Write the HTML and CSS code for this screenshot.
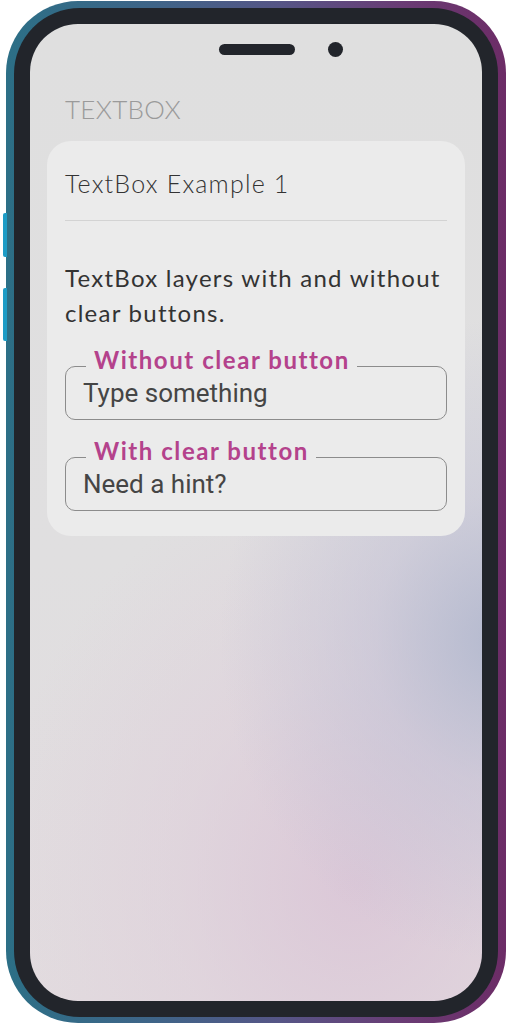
FILE: index.html
```html
<!DOCTYPE html>
<html lang="en">
<head>
<meta charset="utf-8">
<title>TextBox</title>
<link rel="stylesheet" href="styles.css">
</head>
<body>
<div class="phone">
  <span class="side-btn btn-a"></span>
  <span class="side-btn btn-b"></span>
  <div class="body">
    <div class="screen">
      <div class="notch">
        <span class="speaker"></span>
        <span class="camera"></span>
      </div>
      <h1 class="page-title">TEXTBOX</h1>
      <section class="card">
        <h2 class="card-title">TextBox Example 1</h2>
        <hr class="divider">
        <p class="desc">TextBox layers with and without clear buttons.</p>
        <div class="field">
          <span class="label">Without clear button</span>
          <span class="value">Type something</span>
        </div>
        <div class="field">
          <span class="label">With clear button</span>
          <span class="value">Need a hint?</span>
        </div>
      </section>
    </div>
  </div>
</div>
</body>
</html>
```
FILE: styles.css
```css
html, body {
  margin: 0;
  padding: 0;
  background: #ffffff;
}
body {
  width: 512px;
  height: 1024px;
  overflow: hidden;
}
.phone {
  position: relative;
  box-sizing: border-box;
  margin: 1px 0 0 6px;
  width: 500px;
  height: 1022px;
  padding: 7px 8px 6px 8px;
  border-radius: 72px;
  background: linear-gradient(90deg, #2c6f86 0%, #3f6488 30%, #565586 55%, #6a3b74 80%, #6c2c66 100%);
}
.side-btn {
  position: absolute;
  left: -3px;
  width: 4px;
  background: #1d9cc6;
  border-radius: 2px 0 0 2px;
}
.btn-a { top: 212px; height: 44px; }
.btn-b { top: 287px; height: 53px; }
.body {
  box-sizing: border-box;
  height: 100%;
  padding: 16px;
  border-radius: 66px;
  background: #22252b;
}
.screen {
  position: relative;
  box-sizing: border-box;
  height: 100%;
  border-radius: 48px;
  overflow: hidden;
  padding: 70px 17px 0 17px;
  background:
    radial-gradient(ellipse 280px 320px at 104% 63%, rgba(178,184,206,0.95) 0%, rgba(190,190,212,0.5) 45%, rgba(200,190,210,0) 100%),
    radial-gradient(ellipse 360px 420px at 72% 88%, rgba(218,196,214,0.85) 0%, rgba(222,205,218,0.5) 50%, rgba(224,214,220,0) 100%),
    linear-gradient(180deg, #dfdfdf 0%, #e0dfe0 55%, #e2dcdf 100%);
}
.notch {
  position: absolute;
  top: 18px;
  left: 0;
  right: 0;
  display: flex;
  justify-content: center;
  align-items: center;
  gap: 33px;
  padding-left: 50px;
}
.speaker {
  width: 76px;
  height: 11px;
  border-radius: 6px;
  background: #22252b;
}
.camera {
  width: 15px;
  height: 15px;
  border-radius: 50%;
  background: #22252b;
}
.page-title {
  margin: 0 0 17px 18px;
  font-family: Lato, "Noto Sans", sans-serif;
  font-weight: 300;
  font-size: 26px;
  line-height: 30px;
  color: #9a9a9a;
  letter-spacing: 0.3px;
}
.card {
  box-sizing: border-box;
  border-radius: 24px;
  background: #ebebeb;
  padding: 27px 18px 25px 18px;
}
.card-title {
  margin: 0;
  font-family: Lato, "Noto Sans", sans-serif;
  font-weight: 300;
  font-size: 25px;
  line-height: 30px;
  color: #333333;
  letter-spacing: 1.2px;
}
.divider {
  margin: 22px 0 0 0;
  border: 0;
  height: 1px;
  background: #d3d3d3;
}
.desc {
  margin: 39px 0 0 0;
  font-family: Lato, "Noto Sans", sans-serif;
  font-weight: 400;
  font-size: 24px;
  line-height: 35px;
  color: #333333;
  letter-spacing: 1.25px;
}
.field {
  position: relative;
  box-sizing: border-box;
  height: 54px;
  margin-top: 36px;
  border: 1px solid #8c8c8c;
  border-radius: 10px;
  display: flex;
  align-items: center;
  padding-left: 17px;
}
.field + .field { margin-top: 37px; }
.label {
  position: absolute;
  left: 20px;
  top: -21px;
  padding: 0 7px 0 8px;
  background: #ebebeb;
  font-family: Lato, "Noto Sans", sans-serif;
  font-weight: 700;
  font-size: 24px;
  line-height: 28px;
  color: #b4428c;
  letter-spacing: 1.55px;
}
.value {
  font-family: Roboto, "Noto Sans", sans-serif;
  font-size: 26px;
  line-height: 52px;
  color: #454545;
}
```
